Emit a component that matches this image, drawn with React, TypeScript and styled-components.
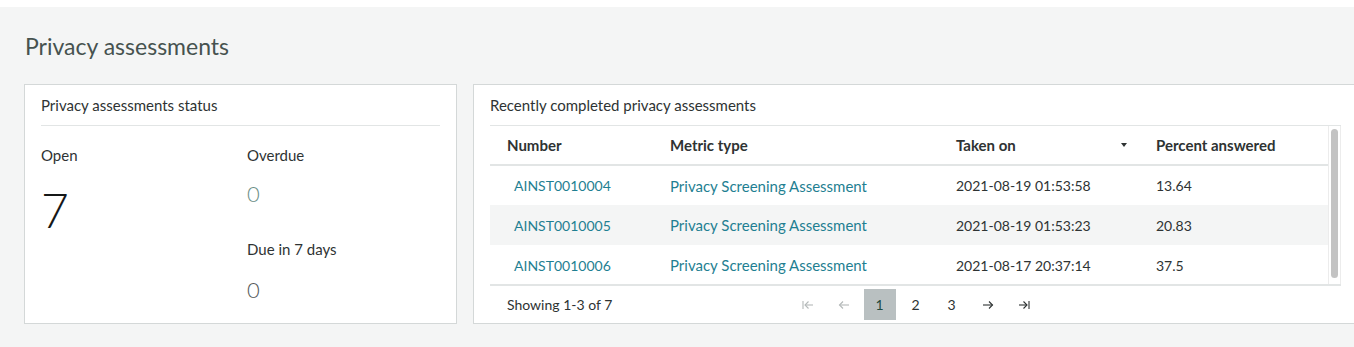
import React from "react";
import styled, { createGlobalStyle } from "styled-components";

const colors = {
  pageBg: "#f4f5f5",
  border: "#d4d8d8",
  divider: "#e2e5e5",
  text: "#2e3333",
  title: "#46524f",
  link: "#1f7f92",
  stripe: "#f4f5f5",
  pageSelected: "#b9c0c1",
};

const GlobalStyle = createGlobalStyle`
  body {
    margin: 0;
    background: #ffffff;
    font-family: Lato, "Noto Sans", sans-serif;
    color: ${colors.text};
  }
`;

interface Assessment {
  number: string;
  metric: string;
  takenOn: string;
  percent: string;
}

const rows: Assessment[] = [
  { number: "AINST0010004", metric: "Privacy Screening Assessment", takenOn: "2021-08-19 01:53:58", percent: "13.64" },
  { number: "AINST0010005", metric: "Privacy Screening Assessment", takenOn: "2021-08-19 01:53:23", percent: "20.83" },
  { number: "AINST0010006", metric: "Privacy Screening Assessment", takenOn: "2021-08-17 20:37:14", percent: "37.5" },
];

const columns = ["163px", "286px", "200px", "189px"];

function ArrowIcon({ dir, bar }: { dir: "left" | "right"; bar?: boolean }) {
  return (
    <svg width="12" height="10" viewBox="0 0 12 10" fill="none" stroke="currentColor" strokeWidth="1.1">
      {dir === "left" ? (
        <>
          {bar && <line x1="1" y1="1" x2="1" y2="9" />}
          <line x1={bar ? 3 : 1.5} y1="5" x2="11" y2="5" />
          <polyline points={bar ? "6.5,1.5 3,5 6.5,8.5" : "5,1.5 1.5,5 5,8.5"} />
        </>
      ) : (
        <>
          {bar && <line x1="11" y1="1" x2="11" y2="9" />}
          <line x1="1" y1="5" x2={bar ? 9 : 10.5} y2="5" />
          <polyline points={bar ? "5.5,1.5 9,5 5.5,8.5" : "7,1.5 10.5,5 7,8.5"} />
        </>
      )}
    </svg>
  );
}

export default function App() {
  return (
    <>
      <GlobalStyle />
      <Page>
        <PageTitle>Privacy assessments</PageTitle>
        <CardsRow>
          <StatusCard>
            <CardHeader>Privacy assessments status</CardHeader>
            <StatusGrid>
              <StatusColumn>
                <Label>Open</Label>
                <BigValue>7</BigValue>
              </StatusColumn>
              <StatusColumn>
                <Label>Overdue</Label>
                <SmallValue $tone="teal">0</SmallValue>
                <Label $spaced>Due in 7 days</Label>
                <SmallValue $tone="gray" $tight>0</SmallValue>
              </StatusColumn>
            </StatusGrid>
          </StatusCard>

          <TableCard>
            <CardHeader>Recently completed privacy assessments</CardHeader>
            <ScrollArea>
              <TableViewport>
                <Table>
                  <colgroup>
                    {columns.map((w) => (
                      <col key={w} style={{ width: w }} />
                    ))}
                  </colgroup>
                  <thead>
                    <tr>
                      <Th>Number</Th>
                      <Th>Metric type</Th>
                      <Th>
                        <SortHeader>
                          Taken on
                          <SortCaret />
                        </SortHeader>
                      </Th>
                      <Th>Percent answered</Th>
                    </tr>
                  </thead>
                  <tbody>
                    {rows.map((row, index) => (
                      <Tr key={row.number} $striped={index % 2 === 1}>
                        <Td $first $numeric>
                          <LinkText>{row.number}</LinkText>
                        </Td>
                        <Td>
                          <LinkText>{row.metric}</LinkText>
                        </Td>
                        <Td $numeric>{row.takenOn}</Td>
                        <Td $numeric>{row.percent}</Td>
                      </Tr>
                    ))}
                  </tbody>
                </Table>
              </TableViewport>
              <ScrollTrack>
                <ScrollThumb />
              </ScrollTrack>
            </ScrollArea>
            <Footer>
              <FooterText>Showing 1-3 of 7</FooterText>
              <Pager>
                <PageButton $disabled>
                  <ArrowIcon dir="left" bar />
                </PageButton>
                <PageButton $disabled>
                  <ArrowIcon dir="left" />
                </PageButton>
                <PageButton $selected>1</PageButton>
                <PageButton>2</PageButton>
                <PageButton>3</PageButton>
                <PageButton>
                  <ArrowIcon dir="right" />
                </PageButton>
                <PageButton>
                  <ArrowIcon dir="right" bar />
                </PageButton>
              </Pager>
              <span />
            </Footer>
          </TableCard>
        </CardsRow>
      </Page>
    </>
  );
}

const Page = styled.div`
  margin-top: 7px;
  height: 340px;
  background: ${colors.pageBg};
  overflow: hidden;
  box-sizing: border-box;
  padding: 25px 0 0 24px;
`;

const PageTitle = styled.h1`
  margin: 0 0 24px 1px;
  font-size: 23px;
  line-height: 28px;
  font-weight: 400;
  color: ${colors.title};
`;

const CardsRow = styled.div`
  display: flex;
  gap: 16px;
  align-items: flex-start;
`;

const Card = styled.div`
  background: #ffffff;
  border: 1px solid ${colors.border};
  box-sizing: border-box;
  height: 240px;
  padding: 0 16px;
  flex-shrink: 0;
`;

const StatusCard = styled(Card)`
  width: 433px;
`;

const TableCard = styled(Card)`
  width: 885px;
  display: flex;
  flex-direction: column;
`;

const CardHeader = styled.div`
  height: 40px;
  line-height: 40px;
  font-size: 15px;
  border-bottom: 1px solid ${colors.divider};
  color: ${colors.text};
`;

const StatusGrid = styled.div`
  display: grid;
  grid-template-columns: 206px 1fr;
`;

const StatusColumn = styled.div`
  display: flex;
  flex-direction: column;
`;

const Label = styled.div<{ $spaced?: boolean }>`
  margin-top: ${(p) => (p.$spaced ? 31 : 19)}px;
  font-size: 15px;
  line-height: 20px;
  color: ${colors.text};
`;

const BigValue = styled.div`
  margin-top: 19px;
  font-size: 48px;
  line-height: 52px;
  font-weight: 300;
  color: #151818;
`;

const SmallValue = styled.div<{ $tone: "teal" | "gray"; $tight?: boolean }>`
  margin-top: ${(p) => (p.$tight ? 17 : 15)}px;
  font-size: 22px;
  line-height: 28px;
  font-weight: 300;
  color: ${(p) => (p.$tone === "teal" ? "#6d8f88" : "#555b5b")};
`;

const ScrollArea = styled.div`
  display: flex;
  height: 158px;
  border-bottom: 2px solid ${colors.divider};
`;

const TableViewport = styled.div`
  width: 838px;
  height: 158px;
  overflow: hidden;
`;

const Table = styled.table`
  width: 838px;
  border-collapse: collapse;
  table-layout: fixed;
`;

const Th = styled.th`
  height: 38px;
  padding: 0 12px 0 17px;
  text-align: left;
  font-weight: 700;
  font-size: 15px;
  color: ${colors.text};
  border-bottom: 2px solid ${colors.divider};
  box-shadow: inset -1px 0 0 #ffffff;
`;

const SortHeader = styled.div`
  display: flex;
  align-items: center;
  justify-content: space-between;
`;

const SortCaret = styled.span`
  width: 0;
  height: 0;
  border-left: 3.5px solid transparent;
  border-right: 3.5px solid transparent;
  border-top: 4px solid #2e3333;
`;

const Tr = styled.tr<{ $striped: boolean }>`
  height: 40px;
  background: ${(p) => (p.$striped ? colors.stripe : "#ffffff")};
`;

const Td = styled.td<{ $first?: boolean; $numeric?: boolean }>`
  padding: 0 12px 0 ${(p) => (p.$first ? 24 : 17)}px;
  font-size: ${(p) => (p.$numeric ? 14 : 15)}px;
  color: ${colors.text};
  white-space: nowrap;
`;

const LinkText = styled.span`
  color: ${colors.link};
  cursor: pointer;
`;

const ScrollTrack = styled.div`
  width: 13px;
  box-sizing: border-box;
  border-left: 1px solid #ececec;
  border-right: 1px solid #ececec;
  padding: 3px 2px 6px;
  display: flex;
`;

const ScrollThumb = styled.div`
  flex: 1;
  background: #c3c3c3;
  border-radius: 4px;
`;

const Footer = styled.div`
  flex: 1;
  display: grid;
  grid-template-columns: 1fr auto 1fr;
  align-items: center;
`;

const FooterText = styled.span`
  padding-left: 17px;
  font-size: 14px;
  color: ${colors.text};
`;

const Pager = styled.div`
  display: flex;
  gap: 4px;
`;

const PageButton = styled.div<{ $selected?: boolean; $disabled?: boolean }>`
  width: 32px;
  height: 31px;
  display: flex;
  align-items: center;
  justify-content: center;
  font-size: 14px;
  color: ${(p) => (p.$disabled ? "#b4b9b9" : p.$selected ? "#1e4a40" : colors.text)};
  background: ${(p) => (p.$selected ? colors.pageSelected : "transparent")};
`;
